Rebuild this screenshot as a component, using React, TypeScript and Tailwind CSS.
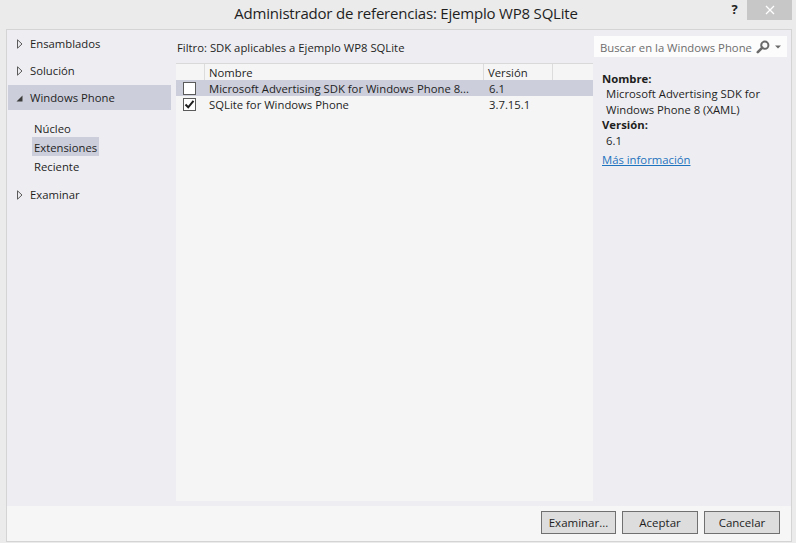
import React from "react";

const Hollow = () => (
  <svg width="6" height="10" viewBox="0 0 6 10" className="shrink-0">
    <polygon points="0.5,0.8 5,5 0.5,9.2" fill="none" stroke="#5a5a5a" strokeWidth="1" />
  </svg>
);

const Expanded = () => (
  <svg width="7" height="7" viewBox="0 0 7 7" className="shrink-0">
    <polygon points="6.5,0.5 6.5,6.5 0.5,6.5" fill="#3c3c3c" />
  </svg>
);

const Check = ({ checked }: { checked: boolean }) => (
  <div className="w-[13px] h-[13px] border border-[#5a5a5a] bg-white flex items-center justify-center shrink-0">
    {checked && (
      <svg width="11" height="11" viewBox="0 0 11 11">
        <path d="M1.5 5.5 L4.2 8.3 L9.5 1.8" fill="none" stroke="#1e1e1e" strokeWidth="2" />
      </svg>
    )}
  </div>
);

export default function App() {
  return (
    <div className="w-[796px] h-[543px] bg-[#ebebeb] flex flex-col font-['Open_Sans',sans-serif] text-[#1e1e1e] text-[11.3px] leading-none overflow-hidden whitespace-nowrap">
      {/* title bar */}
      <div className="h-[29px] flex shrink-0">
        <div className="flex-1 pl-[90px] text-center text-[15px] pt-[6px] text-[#1e1e1e] tracking-[-0.2px]">
          Administrador de referencias: Ejemplo WP8 SQLite
        </div>
        <div className="w-[25px] text-[13px] font-bold pt-[3px] text-[#222] text-center">?</div>
        <div className="w-[45px] h-[20px] bg-[#c7c7c7] flex items-center justify-center">
          <svg width="10" height="10" viewBox="0 0 10 10">
            <path d="M1 1 L9 9 M9 1 L1 9" stroke="#ffffff" strokeWidth="1.3" />
          </svg>
        </div>
        <div className="w-[4px]" />
      </div>

      {/* main box */}
      <div className="ml-[6px] w-[786px] h-[513px] border border-[#d4d4d4] flex flex-col">
        <div className="flex-1 bg-[#eeeef2] flex">
          {/* nav */}
          <div className="w-[169px] pl-[1px] pr-[5px] flex flex-col">
            <div className="h-[27px] flex items-center pl-[9px] gap-[7px] pt-[1px]">
              <Hollow />
              <span>Ensamblados</span>
            </div>
            <div className="h-[27px] flex items-center pl-[9px] gap-[7px] pt-[1px]">
              <Hollow />
              <span>Solución</span>
            </div>
            <div className="h-[25px] my-[1px] flex items-center pl-[8px] gap-[7px] bg-[#cccedb] pt-[1px]">
              <Expanded />
              <span>Windows Phone</span>
            </div>
            <div className="pt-[7px] flex flex-col pl-[24px]">
              <div className="h-[19px] flex items-center pt-[2px]">
                <span className="px-[2px]">Núcleo</span>
              </div>
              <div className="h-[19px] flex items-stretch">
                <span className="px-[2px] flex items-center bg-[#cccedb] pt-[2px]">Extensiones</span>
              </div>
              <div className="h-[19px] flex items-center pt-[2px]">
                <span className="px-[2px]">Reciente</span>
              </div>
            </div>
            <div className="h-[27px] mt-[6px] flex items-center pl-[9px] gap-[7px] pt-[1px]">
              <Hollow />
              <span>Examinar</span>
            </div>
          </div>

          {/* middle */}
          <div className="w-[417px] flex flex-col pb-[5px]">
            <div className="h-[33px] flex items-center pl-[1px] pt-[3px]">
              Filtro: SDK aplicables a Ejemplo WP8 SQLite
            </div>
            <div className="flex-1 bg-[#f5f5f5] border-t border-[#d9d9d9] flex flex-col">
              <div className="h-[16px] flex">
                <div className="w-[29px] border-r border-[#dcdcdc]" />
                <div className="w-[279px] border-r border-[#dcdcdc] pl-[4px] pt-[1px] flex items-center">Nombre</div>
                <div className="w-[69px] border-r border-[#dcdcdc] pl-[4px] pt-[1px] flex items-center">Versión</div>
                <div className="flex-1" />
              </div>
              <div className="h-[16px] flex items-center bg-[#cccedb]">
                <div className="w-[29px] pl-[7px]">
                  <Check checked={false} />
                </div>
                <div className="w-[280px] pl-[4px] pt-[1px]">Microsoft Advertising SDK for Windows Phone 8...</div>
                <div className="pl-[4px] pt-[1px]">6.1</div>
              </div>
              <div className="h-[16px] flex items-center">
                <div className="w-[29px] pl-[7px]">
                  <Check checked={true} />
                </div>
                <div className="w-[280px] pl-[4px] pt-[1px]">SQLite for Windows Phone</div>
                <div className="pl-[4px] pt-[1px]">3.7.15.1</div>
              </div>
            </div>
          </div>

          {/* right */}
          <div className="flex-1 pl-[1px] pr-[4px] flex flex-col">
            <div className="mt-[6px] h-[21px] bg-[#fcfcfc] flex items-center pl-[6px] pr-[6px]">
              <span className="flex-1 text-[#6d6d6d] pt-[2px]">Buscar en la Windows Phone</span>
              <svg width="14" height="14" viewBox="0 0 14 14" className="mr-[5px]">
                <circle cx="8.8" cy="5.2" r="3.6" fill="none" stroke="#6a6a6a" strokeWidth="2" />
                <path d="M6.3 7.7 L1.8 12.2" stroke="#6a6a6a" strokeWidth="2.6" strokeLinecap="round" />
              </svg>
              <svg width="6" height="4" viewBox="0 0 6 4">
                <polygon points="0,0.5 6,0.5 3,3.5" fill="#6a6a6a" />
              </svg>
            </div>
            <div className="pl-[8px] pt-[14px] leading-[15.4px]">
              <div className="font-bold">Nombre:</div>
              <div className="pl-[4px]">Microsoft Advertising SDK for</div>
              <div className="pl-[4px]">Windows Phone 8 (XAML)</div>
              <div className="font-bold">Versión:</div>
              <div className="pl-[4px]">6.1</div>
              <div className="mt-[4px]">
                <span className="text-[#1e73be] underline">Más información</span>
              </div>
            </div>
          </div>
        </div>

        {/* bottom buttons */}
        <div className="h-[35px] bg-[#f6f6f6] flex items-start justify-end pr-[11px] pt-[5px] gap-[6px]">
          <button className="w-[75px] h-[23px] bg-[#dddddd] border border-[#707070] text-[11.5px] text-[#1e1e1e] pt-[1px]">Examinar...</button>
          <button className="w-[76px] h-[23px] bg-[#dddddd] border border-[#707070] text-[11.5px] text-[#1e1e1e] pt-[1px]">Aceptar</button>
          <button className="w-[76px] h-[23px] bg-[#dddddd] border border-[#707070] text-[11.5px] text-[#1e1e1e] pt-[1px]">Cancelar</button>
        </div>
      </div>
    </div>
  );
}
